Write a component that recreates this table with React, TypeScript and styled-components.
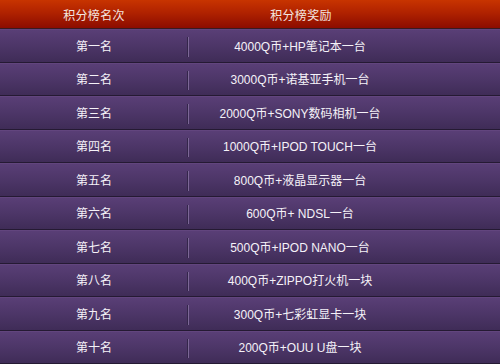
import React from "react";
import styled, { createGlobalStyle } from "styled-components";

const GlobalStyle = createGlobalStyle`
  html, body {
    margin: 0;
    padding: 0;
    background: #2b1f3b;
  }
  body {
    font-family: "Liberation Sans", "Noto Sans CJK SC", sans-serif;
  }
`;

const Board = styled.div`
  width: 500px;
  height: 364px;
  overflow: hidden;
  display: flex;
  flex-direction: column;
  background: #2b1f3b;
`;

const Header = styled.div`
  display: grid;
  grid-template-columns: 188px 1fr;
  height: 28px;
  flex-shrink: 0;
  background: linear-gradient(#c83400, #b02200 45%, #8c0c00);
  border-bottom: 1px solid #3a1a22;
`;

const HeadCell = styled.div<{ $shift?: number }>`
  display: flex;
  align-items: center;
  justify-content: center;
  padding-right: ${(p) => p.$shift ?? 0}px;
  color: #f4e6e0;
  font-size: 12px;
  letter-spacing: 0.3px;
`;

const Row = styled.div`
  display: grid;
  grid-template-columns: 188px 1fr;
  height: 33.5px;
  flex-shrink: 0;
  box-sizing: border-box;
  border-bottom: 1px solid #251a33;
  box-shadow: inset 0 1px 0 #62457e;
  background: linear-gradient(#5a3f77, #4d3668 50%, #3f2c57);
`;

const Cell = styled.div<{ $divider?: boolean; $shift?: number }>`
  position: relative;
  display: flex;
  align-items: center;
  justify-content: center;
  padding-right: ${(p) => p.$shift ?? 0}px;
  color: #f5f2f8;
  font-size: 12px;

  ${(p) =>
    p.$divider &&
    `
    &::after {
      content: "";
      position: absolute;
      right: -1px;
      top: 8px;
      bottom: 5px;
      width: 1px;
      background: #7c6796;
      box-shadow: -1px 0 0 #34264a;
    }
  `}
`;

const prizes: [string, string][] = [
  ["第一名", "4000Q币+HP笔记本一台"],
  ["第二名", "3000Q币+诺基亚手机一台"],
  ["第三名", "2000Q币+SONY数码相机一台"],
  ["第四名", "1000Q币+IPOD TOUCH一台"],
  ["第五名", "800Q币+液晶显示器一台"],
  ["第六名", "600Q币+ NDSL一台"],
  ["第七名", "500Q币+IPOD NANO一台"],
  ["第八名", "400Q币+ZIPPO打火机一块"],
  ["第九名", "300Q币+七彩虹显卡一块"],
  ["第十名", "200Q币+OUU U盘一块"],
];

const App: React.FC = () => (
  <>
    <GlobalStyle />
    <Board>
      <Header>
        <HeadCell>积分榜名次</HeadCell>
        <HeadCell $shift={86}>积分榜奖励</HeadCell>
      </Header>
      {prizes.map(([rank, prize]) => (
        <Row key={rank}>
          <Cell $divider>{rank}</Cell>
          <Cell $shift={88}>{prize}</Cell>
        </Row>
      ))}
    </Board>
  </>
);

export default App;
